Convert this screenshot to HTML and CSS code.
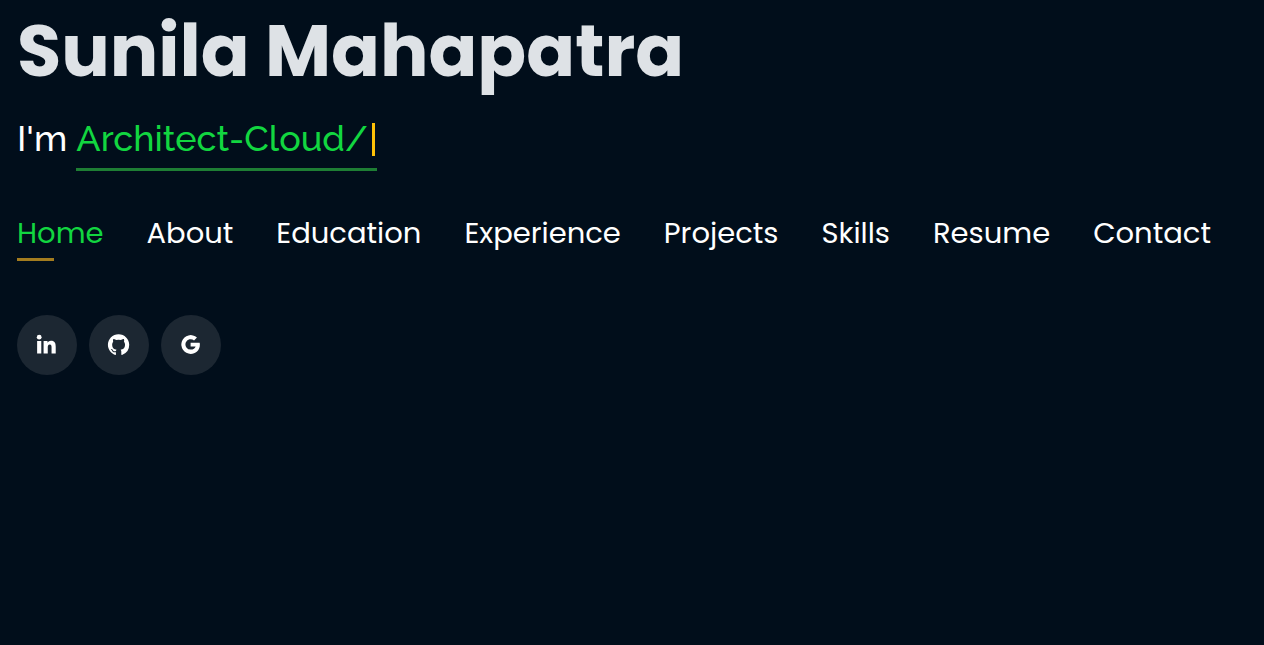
FILE: index.html
```
<!DOCTYPE html>
<html lang="en">
<head>
<meta charset="utf-8">
<meta name="viewport" content="width=device-width, initial-scale=1">
<title>Sunila Mahapatra</title>
<link rel="stylesheet" href="styles.css">
</head>
<body>
<header class="header">
  <h1 class="name">Sunila Mahapatra</h1>
  <h2 class="tagline">I'm <span class="typed">Architect-Cloud/<span class="cursor"></span></span></h2>
  <nav class="nav" aria-label="Main">
    <a class="nav-link active" href="#home">Home</a>
    <a class="nav-link" href="#about">About</a>
    <a class="nav-link" href="#education">Education</a>
    <a class="nav-link" href="#experience">Experience</a>
    <a class="nav-link" href="#projects">Projects</a>
    <a class="nav-link" href="#skills">Skills</a>
    <a class="nav-link" href="#resume">Resume</a>
    <a class="nav-link" href="#contact">Contact</a>
  </nav>
  <div class="social">
    <a class="social-link" href="#linkedin" aria-label="LinkedIn">
      <svg class="icon" viewBox="0 0 24 24" aria-hidden="true"><circle cx="4.98" cy="5" r="2.3"/><path d="M9.2 8.7v12h4V14.8c0-1.53.29-2.9 1.95-2.9 1.65 0 1.7 1.65 1.7 3v5.8h4v-6.6c0-3.3-.8-5.7-4.6-5.7-1.78 0-2.8.97-3.25 1.9h-.05V8.7zm-6.2 0h4v12H3z"/></svg>
    </a>
    <a class="social-link" href="#github" aria-label="GitHub">
      <svg class="icon" viewBox="0 0 24 24" aria-hidden="true"><path d="M12.03 2.1c-5.6 0-10.2 4.5-10.2 10.2 0 4.5 2.9 8.3 7 9.7.5.1.7-.2.7-.5v-2.1c-2.8.6-3.4-.9-3.4-.9-.46-1.16-1.11-1.47-1.11-1.47-.91-.62.07-.6.07-.6 1 .07 1.53 1.03 1.53 1.03.87 1.52 2.34 1.07 2.91.83.09-.65.35-1.09.63-1.34-2.22-.25-4.25-1.11-4.25-4.92 0-1.11.38-2 1.03-2.71-.1-.25-.45-1.29.1-2.64 0 0 .84-.27 2.75 1.02a9 9 0 0 1 4.6 0c1.91-1.29 2.75-1.02 2.75-1.02.55 1.35.2 2.39.1 2.64.65.71 1.03 1.6 1.03 2.71 0 3.82-2.04 4.66-4.27 4.91.36.31.69.92.69 1.85v2.7c0 .3.2.6.7.5a10.2 10.2 0 0 0 6.9-9.7c0-5.6-4.5-10.2-10.2-10.2z"/></svg>
    </a>
    <a class="social-link" href="#google" aria-label="Google">
      <svg class="icon" viewBox="0 0 24 24" aria-hidden="true"><path d="M20.8 10.2h-8.7v3.7h4.8c-.5 2-2.2 3-4.7 3a5 5 0 1 1 3.2-8.8l2.8-2.8a9 9 0 1 0-6 15.7c4.5 0 8.8-3.2 8.8-9.1a8 8 0 0 0-.2-1.7z"/></svg>
    </a>
  </div>
</header>
</body>
</html>
```
FILE: styles.css
```
* {
  box-sizing: border-box;
}

body {
  margin: 0;
  min-height: 100vh;
  background: #010e1b;
  color: #fff;
  font-family: Poppins, Inter, sans-serif;
}

.header {
  padding: 0 17px;
}

.name {
  margin: 0;
  color: #dee2e6;
  font-size: 72px;
  font-weight: 700;
  line-height: 102px;
}

.tagline {
  margin: 10px 0 0;
  font-family: Raleway, Lato, sans-serif;
  font-size: 36px;
  font-weight: 500;
  line-height: 52px;
}

.typed {
  display: inline-block;
  padding-bottom: 4px;
  border-bottom: 3px solid #1e7e34;
  color: #12d640;
}

.cursor {
  display: inline-block;
  width: 3px;
  height: 33px;
  margin-left: 4px;
  margin-right: 2px;
  background: #ffc107;
  vertical-align: -5px;
}

.nav {
  display: flex;
  flex-wrap: wrap;
  gap: 0 43px;
  margin-top: 40px;
}

.nav-link {
  color: #fff;
  font-size: 29px;
  line-height: 44px;
  text-decoration: none;
}

.nav-link.active {
  color: #12d640;
}

.nav-link.active::after {
  content: "";
  display: block;
  width: 37px;
  height: 3px;
  margin-top: 3px;
  background: #a37c1f;
}

.social {
  display: flex;
  gap: 12px;
  margin-top: 54px;
}

.social-link {
  display: flex;
  align-items: center;
  justify-content: center;
  width: 60px;
  height: 60px;
  padding: 0 1px 1px 0;
  border-radius: 50%;
  background: #1c2732;
  color: #fff;
}

.icon {
  width: 25px;
  height: 25px;
  fill: currentColor;
}
```
